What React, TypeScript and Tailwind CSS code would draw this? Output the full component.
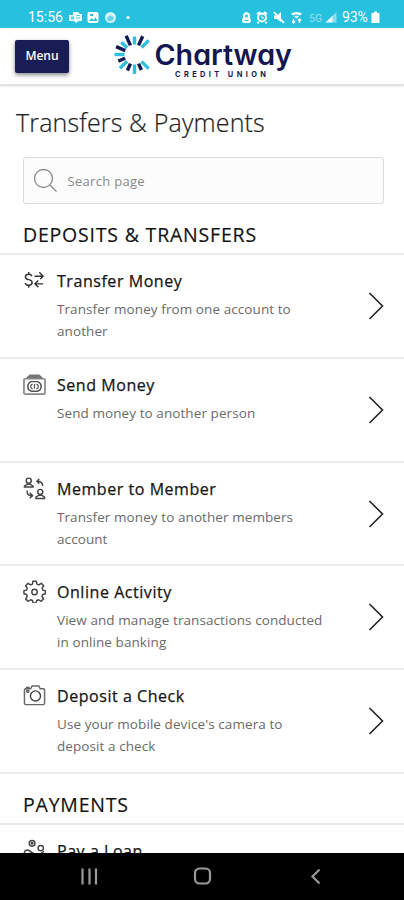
import React from "react";

type IconProps = { className?: string };

const RAYS = [
  { angle: -45, navy: false, end: 20 },
  { angle: -66, navy: true, end: 20 },
  { angle: -90, navy: false, end: 18 },
  { angle: -114, navy: true, end: 20.5 },
  { angle: -137, navy: false, end: 18 },
  { angle: -157, navy: true, end: 20 },
  { angle: 180, navy: false, end: 20 },
  { angle: 158, navy: true, end: 17.5 },
  { angle: 137, navy: false, end: 20 },
  { angle: 114, navy: true, end: 17.5 },
  { angle: 90, navy: false, end: 19.5 },
  { angle: 66, navy: true, end: 17 },
  { angle: 45, navy: false, end: 20 },
];

function Logo() {
  return (
    <svg width="180" height="48" viewBox="0 0 180 48" role="img" aria-label="Chartway Credit Union">
      <g transform="translate(21.5 23.5)" strokeWidth="3.4">
        {RAYS.map((ray) => (
          <line
            key={ray.angle}
            x1="10"
            x2={ray.end}
            y1="0"
            y2="0"
            transform={`rotate(${ray.angle})`}
            stroke={ray.navy ? "#14174f" : "#2fc0dc"}
          />
        ))}
      </g>
      <text
        x="41.5"
        y="33.5"
        textLength="137.5"
        lengthAdjust="spacingAndGlyphs"
        fontSize="28"
        fontWeight="600"
        fill="#14174f"
        fontFamily="Inter, sans-serif"
        style={{ fontFeatureSettings: '"cv11"' }}
      >
        Chartway
      </text>
      <text x="62" y="46" textLength="91" fontSize="7.4" fontWeight="700" fill="#14174f" fontFamily="Inter, sans-serif">
        CREDIT UNION
      </text>
    </svg>
  );
}

function StatusBar() {
  return (
    <div className="flex h-7 shrink-0 items-center bg-[#25c1df] pl-7 pr-6 pt-[6px] text-white">
      <span className="w-[36px] font-[Roboto] text-[14px] leading-5">15:56</span>
      <svg className="ml-1" width="64" height="14" viewBox="0 0 64 14" fill="white">
        <path d="M1 5h4V2h5l2 2h2v7h-3l-3 2-2-2H1z" opacity=".9" />
        <path d="M3 6.500h3v3H3z" fill="#25c1df" opacity=".7" />
        <path d="M8 5.500h4M8 8h4" stroke="#25c1df" opacity=".7" />
        <rect x="19.500" y="2" width="11" height="11" rx="2" />
        <path d="M21 11l2.500-3 2 2 2-2.500 2 3.500z" fill="#25c1df" />
        <rect x="22" y="4" width="3" height="2" fill="#25c1df" />
        <circle cx="42.500" cy="7.500" r="5.500" opacity=".8" />
        <path d="M39 9c1-4 5-5 7-1l-2 3h-4z" fill="#25c1df" opacity=".6" />
        <circle cx="60" cy="7.500" r="1.600" />
      </svg>
      <svg className="ml-auto" width="102" height="14" viewBox="0 0 102 14" fill="white">
        <g transform="translate(1 0)">
          <path d="M2.500 13q-2-1-1.500-3l1-2q-1-5 3.500-6 4.500 1 3.500 6l1 2q0 3-2 3z" />
          <circle cx="5.500" cy="6" r="1.500" fill="#25c1df" />
          <path d="M3.500 10.500h4" stroke="#25c1df" />
        </g>
        <circle cx="22" cy="7.500" r="5" />
        <path d="M17 4l3-2M27 4l-3-2M18.500 12l-1 1.500M25.500 12l1 1.500" stroke="white" strokeWidth="2" />
        <circle cx="22" cy="7.500" r="3" fill="#25c1df" />
        <path d="M22 5.500v2.500h2" stroke="white" fill="none" />
        <path d="M34 5.500h3l4-3.500v10l-4-3h-3z" />
        <path d="M34 2l10 11" stroke="white" strokeWidth="1.800" />
        <path d="M51 3.500q5.500-3 11 0l-2 2q-3.500-2-7 0zM54 6.500q2.500-1.500 5 0l-2.500 2z" />
        <path d="M53.500 13v-4m-1.500 2.500l1.500 1.500 1.500-1.500M59.500 13V9m-1.500 1.500L59.500 9 61 10.500" stroke="white" strokeWidth="1.400" fill="none" />
        <text x="69" y="11.500" fontSize="10.500" fontFamily="Roboto, sans-serif" opacity=".5">5G</text>
        <path d="M85.500 12.500h11V2z" opacity=".45" />
        <path d="M85.500 12.500h7V5.700z" opacity=".8" />
      </svg>
      <span className="mr-px w-[28px] font-[Roboto] text-[14px] leading-5 tracking-[-0.1px]">93%</span>
      <svg width="9" height="14" viewBox="0 0 9 14" fill="white">
        <path d="M3 1.500h3V3h2.500v10h-8V3H3z" />
      </svg>
    </div>
  );
}

function TransferIcon({ className }: IconProps) {
  return (
    <svg className={className} viewBox="0 0 24 24" fill="none" stroke="#333" strokeWidth="1.500">
      <path d="M9 7.500q0-2-3-2-3.500 0-3.500 2.800Q2.500 10.500 6 11.100q3.500.7 3.500 3 0 2.900-3.500 2.900-3.500 0-3.500-2.500M6 3V5.500M6 17v2.500" />
      <path d="M12 7.500h8.500M17 3.500 21 7.500l-3 3M21 15.500h-8.500M16 12 12.500 15.500l3.500 3.500" />
    </svg>
  );
}

function SendIcon({ className }: IconProps) {
  return (
    <svg className={className} viewBox="0 0 24 24" fill="none" stroke="#555" strokeWidth="1.300">
      <rect x="1" y="6" width="22" height="16" rx="1.500" stroke="#888" strokeWidth="1.800" />
      <path d="M4 5.500 7.500 2.500h9l3.500 3M6 4.500h12" stroke="#777" strokeWidth="2" />
      <path d="M8.500 9h7q3.500 1.500 3.500 5t-3.500 5h-7Q5 17.500 5 14t3.500-5z" strokeWidth="1.500" />
      <path d="M10 11.500q-2 .5-2 2.500t2 2.500M14 11.500q2 .5 2 2.500t-2 2.500M12 11.500v5" />
    </svg>
  );
}

function MemberIcon({ className }: IconProps) {
  return (
    <svg className={className} viewBox="0 0 24 24" fill="none" stroke="#444" strokeWidth="1.500">
      <circle cx="6" cy="3.800" r="2.600" />
      <path d="M1.500 10.500V9.500L4.500 7.500h3l3 2v1z" />
      <circle cx="18" cy="15.500" r="2.600" />
      <path d="M13.500 22.500V21l3-2h3l3 2v1.500z" />
      <path d="M20.500 9.500q0-5-5.500-5M17 2l-2.500 2.500L17 7M4.500 14v2.500q0 3 5 3M7 16.500l3 3L7 22" />
    </svg>
  );
}

function GearIcon({ className }: IconProps) {
  return (
    <svg className={className} viewBox="0 0 24 24" fill="none" stroke="#444" strokeWidth="1.500" strokeLinejoin="round">
      <path d="m10.200 1.300h3.600l.7 3 2 .8 2.600-1.600 2.500 2.500-1.600 2.600.8 2 2.600.6v3.100l-2.800.8-.8 2 1.600 2.600-2.500 2.500-2.600-1.600-2 .8-.6 2.500h-3.200l-.6-2.500-2-.8-2.600 1.600-2.500-2.500 1.600-2.600-.8-2-2.600-.8v-3.100l2.600-.6.8-2L2.800 6l2.500-2.500 2.600 1.600 2-.8z" />
      <circle cx="12" cy="12.500" r="2.800" />
    </svg>
  );
}

function CameraIcon({ className }: IconProps) {
  return (
    <svg className={className} viewBox="0 0 24 24" fill="none" stroke="#666" strokeWidth="1.500">
      <path d="M8 5l1.500-3h7L18 5h3q1.500 0 1.500 1.500V20q0 1.500-1.500 1.500H3q-1.500 0-1.500-1.500V6.500Q1.500 5 3 5z" />
      <circle cx="13" cy="12.500" r="5.300" stroke="#444" />
      <circle cx="5" cy="7.500" r="1.200" />
      <path d="M3 3.500h4" />
    </svg>
  );
}

function LoanIcon({ className }: IconProps) {
  return (
    <svg className={className} viewBox="0 0 24 24" fill="none" stroke="#444" strokeWidth="1.500">
      <circle cx="9.500" cy="4.500" r="3" />
      <circle cx="9.500" cy="4.500" r=".8" />
      <circle cx="18.500" cy="9.500" r="2.800" />
      <path d="M1 15l1.500-3 3-.5L11 15h-5M1 20l5-2 7 1 9-6" />
    </svg>
  );
}

const DEPOSITS = [
  { title: "Transfer Money", lines: ["Transfer money from one account to", "another"], Icon: TransferIcon },
  { title: "Send Money", lines: ["Send money to another person"], Icon: SendIcon },
  { title: "Member to Member", lines: ["Transfer money to another members", "account"], Icon: MemberIcon },
  { title: "Online Activity", lines: ["View and manage transactions conducted", "in online banking"], Icon: GearIcon },
  { title: "Deposit a Check", lines: ["Use your mobile device's camera to", "deposit a check"], Icon: CameraIcon },
];

function MenuRow({ title, lines, Icon }: (typeof DEPOSITS)[number]) {
  return (
    <a className="flex h-[103.700px] shrink-0 border-b-2 border-[#ebebeb] pl-[23px] pr-[20px] pt-[14px]">
      <Icon className="h-[23px] w-[23px] shrink-0" />
      <div className="ml-[11px] flex-1 whitespace-nowrap">
        <h3 className="text-[16px] leading-[24px] tracking-[0.550px] text-[#151515] [-webkit-text-stroke:0.250px_#151515]">{title}</h3>
        <p className="mt-[5px] text-[13.500px] leading-[22px] tracking-[0.080px] text-[#6a6a6a]">
          {lines.map((line) => (
            <span key={line} className="block">{line}</span>
          ))}
        </p>
      </div>
      <svg className="mt-[22px] shrink-0" width="16" height="30" viewBox="0 0 16 30" fill="none" stroke="#222" strokeWidth="1.600">
        <path d="M1.500 2 14.500 15 1.500 28" />
      </svg>
    </a>
  );
}

function SectionHeading({ children }: { children: React.ReactNode }) {
  return (
    <h2 className="flex h-[51.400px] shrink-0 items-end whitespace-nowrap border-b-2 border-[#ebebeb] pb-[4px] pl-[23px] text-[19.500px] leading-[28px] tracking-[0.8px] text-[#111] [-webkit-text-stroke:0.150px_#111]">
      {children}
    </h2>
  );
}

export default function App() {
  return (
    <div className="flex h-[900px] w-[404px] flex-col overflow-hidden bg-white font-['Open_Sans',sans-serif]">
      <StatusBar />
      <header className="flex h-[58px] shrink-0 items-start border-b-2 border-[#e2e2e2] bg-white shadow-[0_1px_2px_#eee]">
        <button className="ml-[15px] mt-3 h-[33px] w-[54px] rounded-[2px] bg-[#191c55] pb-[2px] text-[12px] font-semibold leading-[30px] text-white shadow-[0_2px_4px_#888]">
          Menu
        </button>
        <div className="ml-[44px] mt-[3px]">
          <Logo />
        </div>
      </header>

      <main className="flex min-h-0 flex-1 flex-col overflow-hidden">
        <h1 className="ml-4 mt-[19px] shrink-0 whitespace-nowrap text-[25px] font-light leading-[34px] tracking-[0.150px] text-[#222] [-webkit-text-stroke:0.200px_#222]">
          Transfers &amp; Payments
        </h1>
        <div className="ml-[22.500px] mt-[18px] flex h-[47px] w-[361px] shrink-0 items-center rounded-[3px] border border-[#dcdcdc] bg-[#fcfcfc] pl-[9px]">
          <svg width="25" height="25" viewBox="0 0 25 25" fill="none" stroke="#888" strokeWidth="1.300">
            <circle cx="10.500" cy="10.500" r="9" />
            <path d="M17 17l6.500 6.500" />
          </svg>
          <span className="ml-[10px] text-[13px] leading-5 tracking-[0.300px] text-[#888]">Search page</span>
        </div>
        <SectionHeading>DEPOSITS &amp; TRANSFERS</SectionHeading>
        {DEPOSITS.map((item) => (
          <MenuRow key={item.title} {...item} />
        ))}
        <SectionHeading>PAYMENTS</SectionHeading>
        <MenuRow title="Pay a Loan" lines={[]} Icon={LoanIcon} />
      </main>

      <nav className="flex h-[47px] shrink-0 items-start bg-black pt-[13px] text-[#999]">
        <svg width="404" height="20" viewBox="0 0 404 20" fill="none" stroke="currentColor" strokeWidth="2.200">
          <path d="M82.500 2.500v16M89.500 2.500v16M96 2.500v16" />
          <rect x="195" y="2.500" width="15" height="15" rx="4.500" />
          <path d="M319.500 3.500 312.500 10.500l7 7" />
        </svg>
      </nav>
    </div>
  );
}
